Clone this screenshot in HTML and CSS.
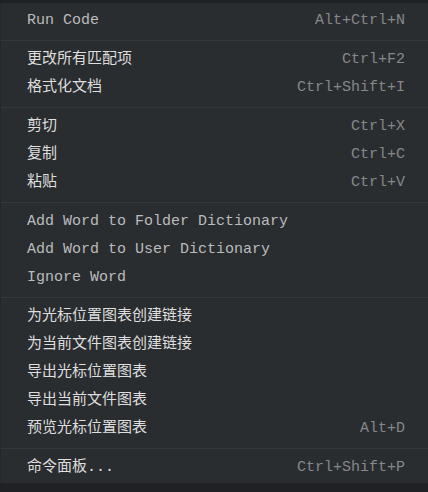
FILE: index.html
```html
<!DOCTYPE html>
<html lang="zh">
<head>
<meta charset="utf-8">
<link rel="stylesheet" href="styles.css">
</head>
<body>
<div class="menu">
  <div class="item"><span class="label latin">Run Code</span><span class="key">Alt+Ctrl+N</span></div>
  <div class="sep"></div>
  <div class="item"><span class="label">更改所有匹配项</span><span class="key">Ctrl+F2</span></div>
  <div class="item"><span class="label">格式化文档</span><span class="key">Ctrl+Shift+I</span></div>
  <div class="sep"></div>
  <div class="item"><span class="label">剪切</span><span class="key">Ctrl+X</span></div>
  <div class="item"><span class="label">复制</span><span class="key">Ctrl+C</span></div>
  <div class="item"><span class="label">粘贴</span><span class="key">Ctrl+V</span></div>
  <div class="sep"></div>
  <div class="item"><span class="label latin">Add Word to Folder Dictionary</span></div>
  <div class="item"><span class="label latin">Add Word to User Dictionary</span></div>
  <div class="item"><span class="label latin">Ignore Word</span></div>
  <div class="sep"></div>
  <div class="item"><span class="label">为光标位置图表创建链接</span></div>
  <div class="item"><span class="label">为当前文件图表创建链接</span></div>
  <div class="item"><span class="label">导出光标位置图表</span></div>
  <div class="item"><span class="label">导出当前文件图表</span></div>
  <div class="item"><span class="label">预览光标位置图表</span><span class="key">Alt+D</span></div>
  <div class="sep"></div>
  <div class="item"><span class="label">命令面板...</span><span class="key">Ctrl+Shift+P</span></div>
</div>
</body>
</html>
```
FILE: styles.css
```css
html, body {
  margin: 0;
  padding: 0;
  background: #1f2124;
  height: 100%;
}
body {
  padding-top: 3px;
  box-sizing: border-box;
  font-family: "Liberation Mono", "Noto Sans CJK SC", monospace;
  font-size: 15px;
}
.menu {
  background: #2a2d30;
  padding: 4px 0 1px 0;
  border-left: 1px solid #25282b;
}
.item {
  height: 28px;
  display: flex;
  align-items: center;
  justify-content: space-between;
  padding: 0 23px 0 26px;
  line-height: 28px;
}
.label {
  color: #dedede;
  white-space: nowrap;
}
.label.latin {
  color: #b9bbbd;
}
.key {
  color: #85888b;
  white-space: nowrap;
}
.sep {
  height: 1px;
  background: #34373b;
  margin: 5px 0 5px 0;
}
```
